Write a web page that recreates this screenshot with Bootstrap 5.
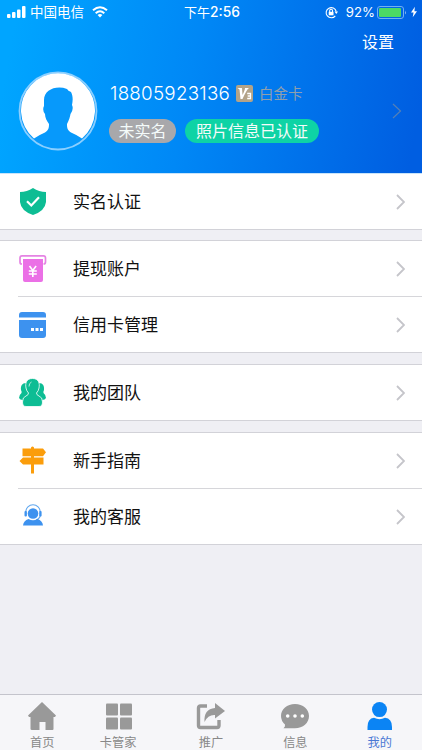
<!DOCTYPE html>
<html lang="zh-CN">
<head>
<meta charset="utf-8">
<meta name="viewport" content="width=device-width, initial-scale=1">
<title>我的</title>
<link href="https://cdn.jsdelivr.net/npm/bootstrap@5.3.0/dist/css/bootstrap.min.css" rel="stylesheet">
<style>
body{font-family:"Liberation Sans","Noto Sans CJK SC",sans-serif;background:#efeff4;height:750px;overflow:hidden;color:#111}
svg{display:block;flex:none}
.hero{height:174px;background:linear-gradient(100deg,#00a5ff 4%,#0088f6 45%,#005ee1 97%);border-bottom:1px solid #c8e4fa}
.status{height:24px;font-size:13px;line-height:24px;padding-left:7px;padding-right:5px}
.carrier{font-size:13.5px;margin-left:4px;margin-right:8px;padding-top:1px}
.clock{left:184px;top:0;font-size:13.8px;font-family:Inter,"Noto Sans CJK SC",sans-serif;font-weight:500}
.clock small{font-size:13px;font-weight:400}
.pct{font-family:Inter,sans-serif;font-size:13.200px;margin-left:8px;margin-right:2px}
.settings{height:38px;padding-right:28px;font-size:16px;line-height:38px}
.profile{height:98px;padding-left:18px;padding-right:20px}
.info{margin-left:12px;padding-top:2px}
.phone{font-family:Inter,sans-serif;font-weight:300;font-size:18.8px;line-height:24px;letter-spacing:.25px;width:122px}
.level{font-size:14.5px;line-height:24px;color:#8f9fac;margin-left:6px}
.pills{margin-top:13px}
.tagpill{height:24px;line-height:25px;border-radius:12px;font-size:16px;text-align:center;color:#f4fbfa}
.tag-off{width:67px;background:#a8a8ab;margin-left:-1px}
.tag-ok{width:134px;background:#0ed3a5;margin-left:9px}
.menu-group{background:#fff;border-bottom:1px solid #d2d2d8;border-top:1px solid #d2d2d8;margin-bottom:11px}
.menu-group.first{border-top:0;margin-bottom:10px}
.menu-row{height:55px;padding-left:18px;font-size:17px}
.menu-label{margin-left:26px;padding-right:17px;height:55px}
.menu-label span{padding-top:2px}
.sep{height:1px;background:#d6d6da;margin-left:18px}
.tabs{height:56px;background:#f6f6f9;border-top:1px solid #c4c4cc;color:#888;font-size:12.2px}
.tab-item{width:84.4px;padding-top:6px}
.tab-item span{line-height:18px;margin-top:3px}
.tab-cards{padding-right:17px}
.tab-on{color:#4a78d4}
</style>
</head>
<body class="d-flex flex-column">
<header class="hero text-white flex-shrink-0">
  <div class="status d-flex align-items-center position-relative text-nowrap">
    <svg width="19" height="12" fill="#fff"><rect y="8" width="3.5" height="4" rx="1"/><rect x="5" y="6" width="3.5" height="6" rx="1"/><rect x="10" y="3.5" width="3.5" height="8.500" rx="1"/><rect x="15" y="0" width="3.500" height="12" rx="1"/></svg>
    <span class="carrier">中国电信</span>
    <svg width="16" height="12" viewBox="0 0 16 12" fill="none" stroke="#fff" stroke-width="2"><path d="M1 4.300Q8-1.900 15 4.300M3.700 7.200Q8 3.200 12.300 7.200"/><path d="M5.600 9Q8 7.200 10.400 9L8 11.500z" fill="#fff" stroke="none"/></svg>
    <span class="clock position-absolute"><small>下午</small>2:56</span>
    <div class="d-flex align-items-center ms-auto">
      <svg width="13" height="13" viewBox="0 0 13 13" fill="none" stroke="#fff" stroke-width="1.100"><path d="M10.300 9.800A5.100 5.100 0 1 1 11.200 5.500"/><path d="M9.500 5.500h3.500l-1.700 2.400z" fill="#fff" stroke="none"/><rect x="3.700" y="5.800" width="4.800" height="3.500" fill="#fff" stroke="none"/><path d="M4.700 6V4.600a1.400 1.400 0 0 1 2.800 0V6"/></svg>
      <span class="pct">92%</span>
      <svg width="30" height="13" viewBox="0 0 30 13"><rect x=".5" y=".5" width="26" height="12" rx="2.500" fill="none" stroke="#72b1f2"/><rect x="2" y="2" width="22" height="9" rx="1" fill="#4cd964"/><path d="M28 4.500q1.800 2 0 4z" fill="#8bbcf2"/></svg>
      <svg class="ms-1" width="6" height="12" viewBox="0 0 7 12" fill="#fff"><path d="M4.500 0L0 6.700h3L2 12 7 5H4z"/></svg>
    </div>
  </div>
  <div class="settings text-end">设置</div>
  <div class="profile d-flex align-items-center">
    <svg width="80" height="80" viewBox="0 0 80 80"><circle cx="40" cy="40" r="38.500" fill="#0799fb" stroke="#8bcfff" stroke-width="1.800"/><path d="M16 67.500A37 37 0 1 1 64 67.500Q59 64 53 61.500C49 59 49 56 49 53C51 49 52 46 52.500 43Q56 38 54 34C55 29 55 25 53 21Q50 20 49 18C38 14 26 19 26 29L26 35Q24 39 27 43C27 47 29 50 31 53C31 56 31 59 27 61.500Q21 64 16 67.500z" fill="#fff"/></svg>
    <div class="info text-nowrap">
      <div class="d-flex align-items-center">
        <span class="phone">18805923136</span>
        <svg class="ms-1" width="17" height="17" viewBox="0 0 17 17"><rect width="17" height="17" rx="2" fill="#b3a388"/><path d="M1.500 3H6L6.500 10Q9 5 9 3H13Q11 4 6.500 14H4.500L3.500 4.500z" fill="#fff"/><path d="M11.200 8.500h3.300v5h-3.300M11.700 11h2.800" fill="none" stroke="#fff" stroke-width="1.300"/></svg>
        <span class="level">白金卡</span>
      </div>
      <div class="pills d-flex"><span class="tagpill tag-off">未实名</span><span class="tagpill tag-ok">照片信息已认证</span></div>
    </div>
    <svg class="ms-auto" width="10" height="16" viewBox="0 0 10 16" fill="none" stroke="#5580b6" stroke-width="1.200"><path d="M1 1l7.500 7L1 15"/></svg>
  </div>
</header>
<main class="flex-grow-1">
  <section class="menu-group first">
    <div class="menu-row d-flex align-items-center">
      <svg width="29" height="29" viewBox="0 0 29 29"><path d="M15 1Q21 5 28 5V15Q27 24 15 28Q3 24 2 15V5Q9 5 15 1z" fill="#0dbd94"/><path d="M9 14.300l4.300 4.200L21 10.300" fill="none" stroke="#fff" stroke-width="2.200"/></svg>
      <div class="menu-label d-flex align-items-center flex-grow-1"><span>实名认证</span><svg class="ms-auto" width="9" height="16" viewBox="0 0 9 16" fill="none" stroke="#c5c5ca" stroke-width="1.800"><path d="M1 1l7 7-7 7"/></svg></div>
    </div>
  </section>
  <section class="menu-group">
    <div class="menu-row d-flex align-items-center">
      <svg width="29" height="29" viewBox="0 0 29 29"><path d="M4 10H3.500Q2 10 2 8V4Q2 1.800 4 1.800H25.500Q27.500 1.800 27.500 4V8Q27.500 10 25.500 10" fill="none" stroke="#e583e3" stroke-width="1.700"/><path d="M5 5H25V26Q25 28 23 28H7Q5 28 5 26z" fill="#eb70e6"/><path d="M11.500 12l3.300 4.500 3.300-4.500M10.800 17h8M10.800 20h8M14.800 16.500V23" fill="none" stroke="#fff" stroke-width="1.600"/></svg>
      <div class="menu-label d-flex align-items-center flex-grow-1"><span>提现账户</span><svg class="ms-auto" width="9" height="16" viewBox="0 0 9 16" fill="none" stroke="#c5c5ca" stroke-width="1.800"><path d="M1 1l7 7-7 7"/></svg></div>
    </div>
    <div class="sep"></div>
    <div class="menu-row d-flex align-items-center">
      <svg width="29" height="29" viewBox="0 0 29 29" fill="#3d92ef"><path d="M1 7.500V5Q1 2 4 2H25Q28 2 28 5V7.500zM1 10H28V25Q28 28 25 28H4Q1 28 1 25z"/><path d="M13 18h3v3h-3zM17.500 18h3v3h-3zM22 18h3v3h-3z" fill="#fff"/></svg>
      <div class="menu-label d-flex align-items-center flex-grow-1"><span>信用卡管理</span><svg class="ms-auto" width="9" height="16" viewBox="0 0 9 16" fill="none" stroke="#c5c5ca" stroke-width="1.800"><path d="M1 1l7 7-7 7"/></svg></div>
    </div>
  </section>
  <section class="menu-group">
    <div class="menu-row d-flex align-items-center">
      <svg width="29" height="29" viewBox="0 0 29 29" fill="#0dbd94"><path d="M8 5C4 5 2.500 8 3 12Q4 14 3.500 15Q1 17 1 20Q2 22 5 22L11 16zM21 5C25 5 26.500 8 26 12Q25 14 25.500 15Q28 17 28 20Q27 22 24 22L18 16z"/><path d="M14.500 .5C8.500 .5 7 5 8 10Q8.500 13 10.500 15Q10.500 17 8 18Q4.500 19 4.500 24Q4.500 28.500 8 28.500H21Q24.500 28.500 24.500 24Q24.500 19 21 18Q18.500 17 18.500 15Q20.500 13 21 10C22 5 20.500 .5 14.500 .5z" stroke="#fff" stroke-width=".8"/><path d="M11 8.500Q11 5 13.500 4" fill="none" stroke="#b5eadf"/></svg>
      <div class="menu-label d-flex align-items-center flex-grow-1"><span>我的团队</span><svg class="ms-auto" width="9" height="16" viewBox="0 0 9 16" fill="none" stroke="#c5c5ca" stroke-width="1.800"><path d="M1 1l7 7-7 7"/></svg></div>
    </div>
  </section>
  <section class="menu-group">
    <div class="menu-row d-flex align-items-center">
      <svg width="29" height="29" viewBox="0 0 29 29" fill="#fb9d0b"><path d="M13 1.500q1.500-2 3 0V2.500H25L28 6.200 25 10.300H16V11.500H25.500V18.500H16V27.500H13V18.500H5L1.500 15 5 11.500H13V10.300H4.500V2.500H13z"/></svg>
      <div class="menu-label d-flex align-items-center flex-grow-1"><span>新手指南</span><svg class="ms-auto" width="9" height="16" viewBox="0 0 9 16" fill="none" stroke="#c5c5ca" stroke-width="1.800"><path d="M1 1l7 7-7 7"/></svg></div>
    </div>
    <div class="sep"></div>
    <div class="menu-row d-flex align-items-center">
      <svg width="29" height="29" viewBox="0 0 29 29" fill="#3d92ef"><circle cx="15" cy="11.500" r="5.300"/><path d="M7.800 10a7.200 7.200 0 0 1 14.400 0M22.500 13Q21.500 17 18 18" fill="none" stroke="#62a8ef" stroke-width="1.100"/><rect x="6.500" y="9" width="2.400" height="5.500" rx="1"/><rect x="21.200" y="9" width="2.400" height="5.500" rx="1"/><path d="M5 23.500Q5.500 18.500 10.500 17Q15 19.500 19.500 17Q24.500 18.500 25 23.500z"/></svg>
      <div class="menu-label d-flex align-items-center flex-grow-1"><span>我的客服</span><svg class="ms-auto" width="9" height="16" viewBox="0 0 9 16" fill="none" stroke="#c5c5ca" stroke-width="1.800"><path d="M1 1l7 7-7 7"/></svg></div>
    </div>
  </section>
</main>
<nav class="tabs d-flex flex-shrink-0 text-nowrap">
  <div class="tab-item d-flex flex-column align-items-center"><svg width="30" height="30" viewBox="0 0 30 30" fill="#999"><path d="M15 1L29 14.500 28 16H26.500V28Q26.500 29 25.500 29H18.500V21H12.500V29H5Q3.500 29 3.500 28V16H2L1 14.500z"/></svg><span>首页</span></div>
  <div class="tab-item tab-cards d-flex flex-column align-items-center"><svg width="30" height="30" viewBox="0 0 30 30" fill="#999"><rect x="3" y="2.500" width="12" height="12" rx="1"/><rect x="17" y="2.500" width="12" height="12" rx="1"/><rect x="3" y="16.500" width="12" height="12" rx="1"/><rect x="17" y="16.500" width="12" height="12" rx="1"/></svg><span>卡管家</span></div>
  <div class="tab-item d-flex flex-column align-items-center"><svg width="30" height="30" viewBox="0 0 30 30" fill="#999"><path d="M11 5H4.500Q2.500 5 2.500 7V24.500Q2.500 26.500 4.500 26.500H21Q23 26.500 23 24.500V19" fill="none" stroke="#999" stroke-width="3.400"/><path d="M19 2L29 10 19 17.500V14Q12 13.500 8.500 21Q7.500 8 19 7z"/></svg><span>推广</span></div>
  <div class="tab-item d-flex flex-column align-items-center"><svg width="30" height="30" viewBox="0 0 30 30" fill="#999"><path d="M15 3C7 3 1 8 1 15Q1 20 5 23.500Q5.500 25.500 3.500 27.300H15C23 27.300 29 22 29 15S23 3 15 3z"/><g fill="#fff"><circle cx="7.700" cy="15" r="1.800"/><circle cx="15" cy="15" r="1.800"/><circle cx="22.300" cy="15" r="1.800"/></g></svg><span>信息</span></div>
  <div class="tab-item tab-on d-flex flex-column align-items-center"><svg width="30" height="30" viewBox="0 0 30 30" fill="#0b84f4"><circle cx="14.500" cy="8.600" r="7.500"/><path d="M2.500 29V26Q2.500 17.500 9 16.800Q14.500 19.500 20 16.800Q27 17.500 27 26V29z"/></svg><span>我的</span></div>
</nav>
<script src="https://cdn.jsdelivr.net/npm/bootstrap@5.3.0/dist/js/bootstrap.bundle.min.js"></script>
</body>
</html>
